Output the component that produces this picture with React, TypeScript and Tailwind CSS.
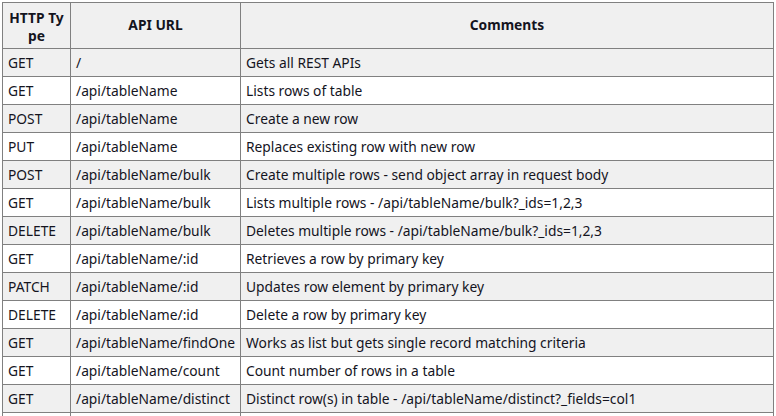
import React from "react";

const rows: [string, string, string][] = [
  ["GET", "/", "Gets all REST APIs"],
  ["GET", "/api/tableName", "Lists rows of table"],
  ["POST", "/api/tableName", "Create a new row"],
  ["PUT", "/api/tableName", "Replaces existing row with new row"],
  ["POST", "/api/tableName/bulk", "Create multiple rows - send object array in request body"],
  ["GET", "/api/tableName/bulk", "Lists multiple rows - /api/tableName/bulk?_ids=1,2,3"],
  ["DELETE", "/api/tableName/bulk", "Deletes multiple rows - /api/tableName/bulk?_ids=1,2,3"],
  ["GET", "/api/tableName/:id", "Retrieves a row by primary key"],
  ["PATCH", "/api/tableName/:id", "Updates row element by primary key"],
  ["DELETE", "/api/tableName/:id", "Delete a row by primary key"],
  ["GET", "/api/tableName/findOne", "Works as list but gets single record matching criteria"],
  ["GET", "/api/tableName/count", "Count number of rows in a table"],
  ["GET", "/api/tableName/distinct", "Distinct row(s) in table - /api/tableName/distinct?_fields=col1"],
  ["", "", ""],
];

const App: React.FC = () => {
  return (
    <div className="bg-white pt-[2px] pl-[2px] font-['Noto_Sans',sans-serif] text-[13.8px] text-[#14141e]">
      <table className="border-collapse w-[772px] table-fixed">
        <colgroup>
          <col className="w-[68px]" />
          <col className="w-[170px]" />
          <col />
        </colgroup>
        <thead>
          <tr className="bg-[#f0f0f0] h-[46px]">
            <th className="border border-[#808080] px-[5px] pt-[2px] font-bold leading-[18px] text-center break-all">
              HTTP Type
            </th>
            <th className="border border-[#808080] px-[5px] font-bold text-center">API URL</th>
            <th className="border border-[#808080] px-[5px] font-bold text-center">Comments</th>
          </tr>
        </thead>
        <tbody>
          {rows.map(([method, url, comment], i) => (
            <tr key={i} className={`h-[28px] ${i % 2 === 0 ? "bg-[#f0f0f0]" : "bg-white"}`}>
              <td className="border border-[#808080] px-[5px] py-0 leading-[19px] whitespace-nowrap">{method}</td>
              <td className="border border-[#808080] px-[5px] py-0 leading-[19px] whitespace-nowrap">{url}</td>
              <td className="border border-[#808080] px-[5px] py-0 leading-[19px] whitespace-nowrap">{comment}</td>
            </tr>
          ))}
        </tbody>
      </table>
    </div>
  );
};

export default App;
